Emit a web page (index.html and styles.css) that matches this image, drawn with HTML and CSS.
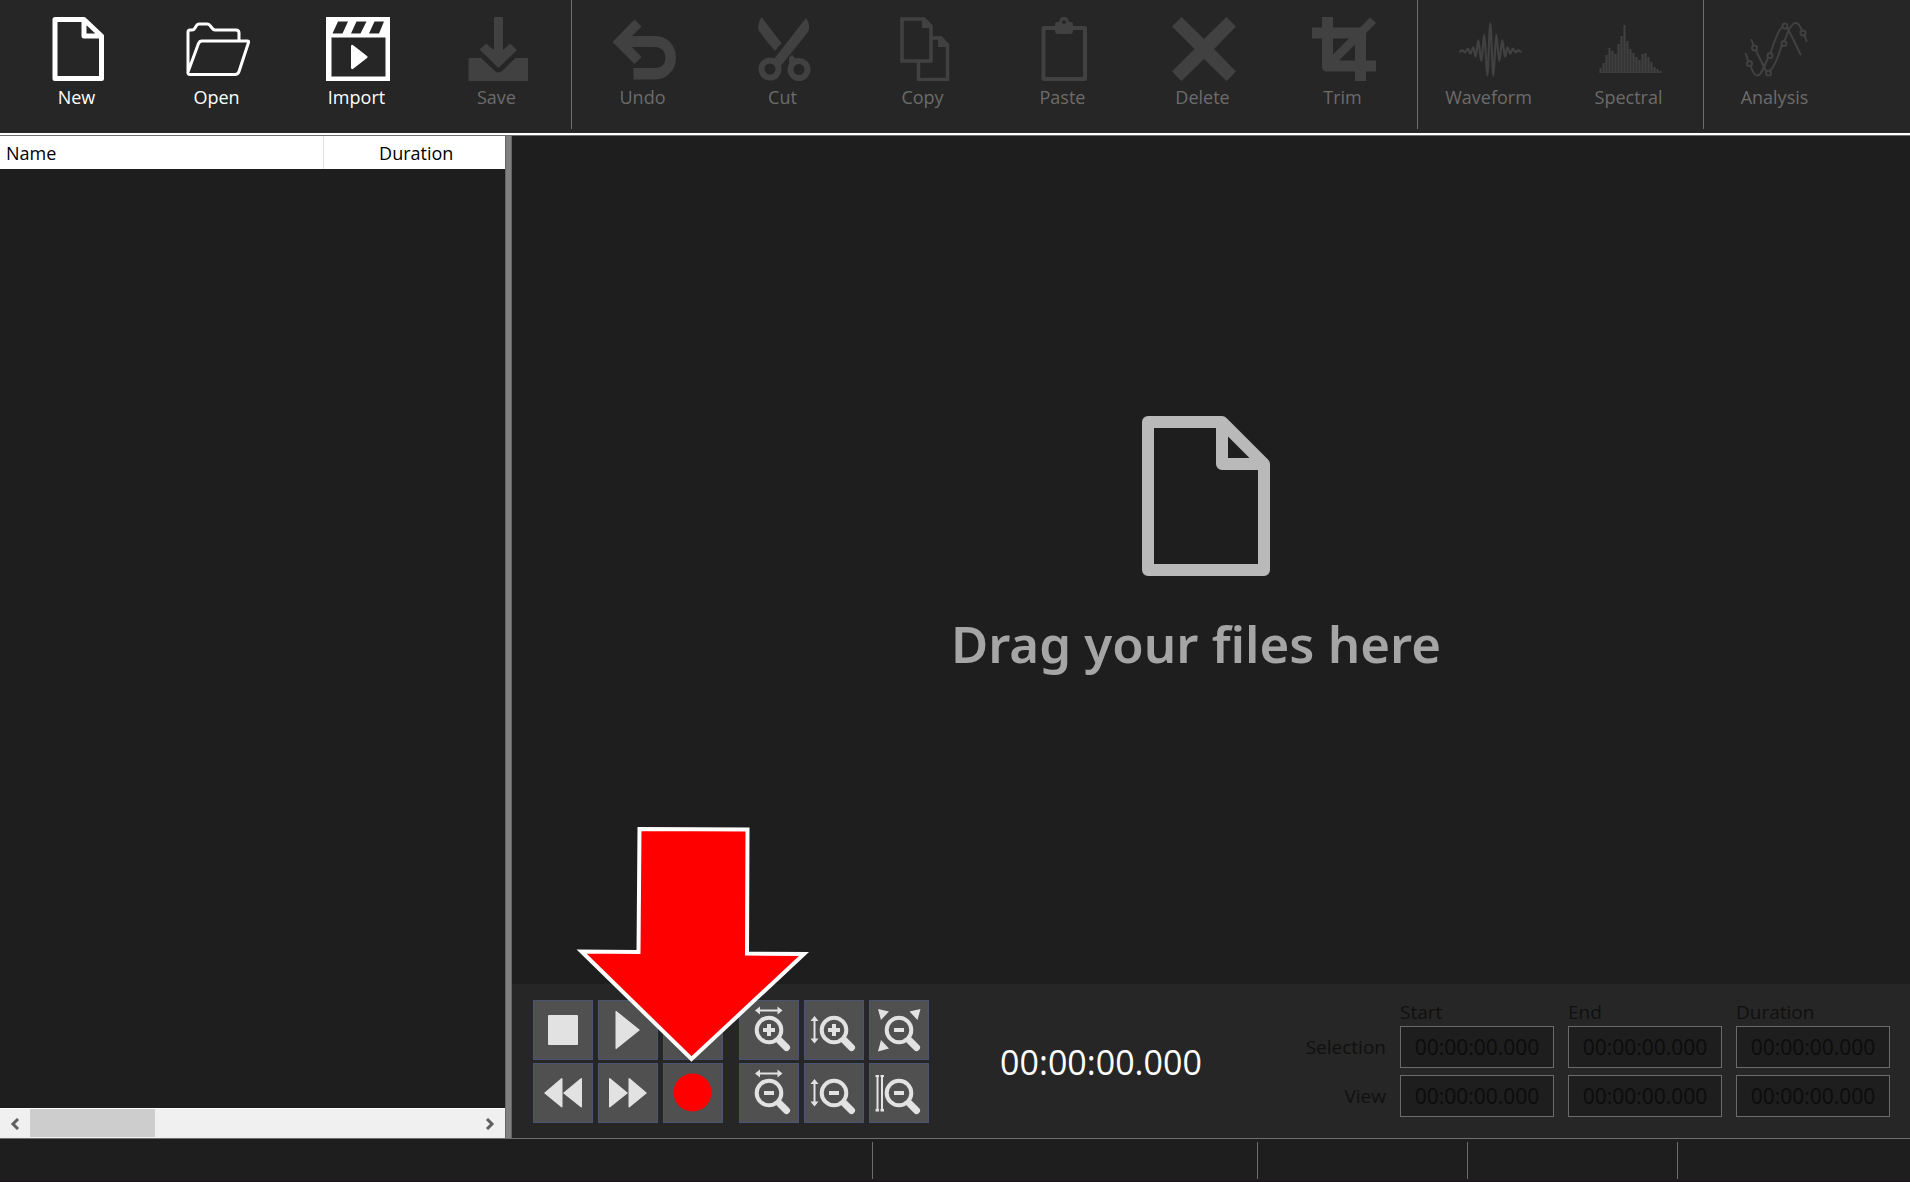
FILE: index.html
```
<!DOCTYPE html>
<html lang="en">
<head>
<meta charset="utf-8">
<title>Audio Editor</title>
<link rel="stylesheet" href="styles.css">
</head>
<body>
<header class="toolbar">
  <div class="tool-group">
    <button class="tool" type="button">
      <svg class="tool-icon" viewBox="0 0 64 64" fill="none" stroke="currentColor" stroke-width="5" stroke-linejoin="round"><path d="M9 2.500H38L55.500 19V61.500H9ZM38 2.500V19H55.500"/></svg>
      <span>New</span>
    </button>
    <button class="tool" type="button">
      <svg class="tool-icon" viewBox="0 0 64 64" fill="none" stroke="currentColor" stroke-width="3" stroke-linejoin="round"><path d="M2 55V15Q2 13 4 13H6Q8 13 9 11L10.500 8.500Q11.500 7 13 7H21Q23 7 24 8.500L26 11Q27.500 13 29 13H50Q53 13 53 16V24M2 55Q1.500 57.500 4 57.500H49Q52 57.500 53 54.500L62.500 25.500Q63 24 61.500 24H16Q13.500 24 12.500 26.500L2 55"/></svg>
      <span>Open</span>
    </button>
    <button class="tool" type="button">
      <svg class="tool-icon" viewBox="0 0 64 64" fill="currentColor" fill-rule="evenodd"><path d="M0 0H64V64H0ZM5.500 20.500V59.500H59.500V20.500ZM12 4.500L6.500 16.500H16.500L22 4.500ZM30.500 4.500L25 16.500H34.500L40.500 4.500ZM48.500 4.500L43 16.500H53L58 4.500Z"/><path d="M25 29Q25.500 27 27.500 28.500L41 39Q42.500 40 41 41L27.500 51.500Q25.500 53 25 51Z"/></svg>
      <span>Import</span>
    </button>
    <button class="tool" type="button" disabled>
      <svg class="tool-icon" viewBox="0 0 64 64" fill="currentColor"><path d="M28 1Q28 0 29 0H36Q37 0 37 1V33L44 26.500L51 33L32.500 51L13.500 32.500L20 26.500L28 33ZM3.500 41H15L29 54Q32.500 57 36 54L49.500 41H61Q62 41 62 42V64H2.500V42Q2.500 41 3.500 41Z"/></svg>
      <span>Save</span>
    </button>
  </div>
  <div class="tool-group">
    <button class="tool" type="button" disabled>
      <svg class="tool-icon" viewBox="0 0 64 64" fill="currentColor"><path d="M0.500 25L22.500 2.500L29.500 9.500L20 19H43Q52 19 58 25Q64 31.500 64 40.500Q64 50 58 56Q52 62.500 43 62.500H21.500V51H43Q48 51 51 48Q53.500 45 53.500 41Q53.500 36.500 51 33.500Q48 30 43 30H20L29.500 40L22.500 47Z"/></svg>
      <span>Undo</span>
    </button>
    <button class="tool" type="button" disabled>
      <svg class="tool-icon" viewBox="0 0 64 64" fill="currentColor"><path d="M9.500 0Q5 7 6.500 13Q14 24 23 34L29.500 26Z"/><path d="M54 1Q59 8 56 15L28 50L22 42Z"/><path d="M37 41L40 38L46 44L37 47Z"/><g fill="none" stroke="currentColor" stroke-width="6"><circle cx="18" cy="52" r="8.500"/><circle cx="47" cy="52.500" r="8.500"/></g></svg>
      <span>Cut</span>
    </button>
    <button class="tool" type="button" disabled>
      <svg class="tool-icon" viewBox="0 0 64 64" fill="none" stroke="currentColor" stroke-width="3.500"><path d="M10 2H32L39 9V44H10Z"/><path d="M40 21H49L55.500 28V62.500H26.500V44"/><path fill="currentColor" stroke="none" d="M30 2H33L39 9V11H30ZM46 21H50L56 28V30H46Z"/></svg>
      <span>Copy</span>
    </button>
    <button class="tool" type="button" disabled>
      <svg class="tool-icon" viewBox="0 0 64 64" fill="none" stroke="currentColor" stroke-width="4" stroke-linejoin="round"><path d="M11.500 11H53V62H11.500Z"/><path fill="currentColor" fill-rule="evenodd" stroke="none" d="M23 7Q23 5 25 5H27Q28 0 32 0Q36 0 37 5H39Q41 5 41 7V14Q41 17 38 17H26Q23 17 23 14ZM32 3A2 2 0 1 0 32 7A2 2 0 1 0 32 3Z"/></svg>
      <span>Paste</span>
    </button>
    <button class="tool" type="button" disabled>
      <svg class="tool-icon" viewBox="0 0 64 64" fill="currentColor"><path d="M9.500 0L32 22L54.500 0L64 9.500L42 32L64 54.500L54.500 64L32 42L9.500 64L0 54.500L22.500 32L0 9.500Z"/></svg>
      <span>Delete</span>
    </button>
    <button class="tool" type="button" disabled>
      <svg class="tool-icon" viewBox="0 0 64 64" fill="currentColor" fill-rule="evenodd"><path d="M10 0H21V10.500H48L58 0.500L64 6L54 16V43.500H64V54.500H54V64H43V54.500H15Q10 54.500 10 49.500V21.500H0V10.500H10ZM21 21.500V37.500L37 21.500ZM43 27.500L27 43.500H43Z"/></svg>
      <span>Trim</span>
    </button>
  </div>
  <div class="tool-group">
    <button class="tool" type="button" disabled>
      <svg class="tool-icon" viewBox="0 0 64 64" fill="none" stroke="currentColor" stroke-width="2.200" stroke-linejoin="round" stroke-linecap="round"><path d="M2 34.700C2.500 34 3.300 33.300 4.300 33.300S6 35.300 7 35.300S9 31.700 10 31.700S11.300 36.700 12.300 36.700S14.300 30.300 15.300 30.300S16.700 39.700 17.700 39.700S19.300 23.300 20.300 23.300S22.300 44 23.300 44S25.300 17.700 26.300 17.700S28.300 58.700 29.300 58.700S31.300 6.300 32.300 6.300S34.300 58.700 35.300 58.700S37.300 17.700 38.300 17.700S40.300 44 41.300 44S43.300 23.300 44.300 23.300S46 39.700 47 39.700S48.300 30.300 49.300 30.300S51.300 36.700 52.300 36.700S53.700 31.700 54.700 31.700S56.700 35.300 57.700 35.300S59.300 33.300 60.300 33.300S62 34 62.700 34.700"/></svg>
      <span>Waveform</span>
    </button>
    <button class="tool" type="button" disabled>
      <svg class="tool-icon" viewBox="0 0 64 64" fill="none" stroke="currentColor" stroke-width="2"><path d="M2.500 56V51M5.500 56V46M8.500 56V38M11.500 56V31M14.500 56V34M17.500 56V37M20.500 56V27M23.500 56V19M26.500 56V8M29.500 56V24M32.500 56V32M35.500 56V36M38.500 56V40M41.500 56V43M44.500 56V37M47.500 56V36M50.500 56V40M53.500 56V45M56.500 56V50M59.500 56V52M62.500 56V54"/><path stroke-width="1" opacity=".5" d="M2 55.500H63M7 56V46M10 56V38M13 56V34M16 56V37M19 56V37M22 56V27M25 56V19M28 56V24M31 56V32M34 56V36M37 56V40M40 56V43M43 56V43M46 56V37M49 56V40M52 56V45M55 56V50M58 56V52"/></svg>
      <span>Spectral</span>
    </button>
  </div>
  <div class="tool-group">
    <button class="tool" type="button" disabled>
      <svg class="tool-icon" viewBox="0 0 64 64" fill="none" stroke="currentColor" stroke-width="2" stroke-linecap="round"><path d="M2 37L4 43.500M6.500 49Q10 58.500 13 58.500Q16 59 19 52L24 41M26.500 36Q34 13 38 10.500M42.500 10.500Q45 13 56.500 37.500M7.500 23L9.500 28.500M12 33.500L21.500 53M26 53.500Q31 50 37.500 29M40.500 24Q47 5 52 6Q55 6 58 13.500M60.500 18.500L62.500 24"/><circle cx="5.500" cy="46.500" r="2.500"/><circle cx="10.500" cy="31" r="2.500"/><circle cx="24.500" cy="56" r="2.500"/><circle cx="26" cy="38.500" r="2.500"/><circle cx="40" cy="26.500" r="2.500"/><circle cx="41" cy="9" r="2.500"/><circle cx="59" cy="16" r="2.500"/></svg>
      <span>Analysis</span>
    </button>
  </div>
</header>

<main class="workspace">
  <section class="files" aria-label="Files">
    <table class="file-table">
      <thead><tr><th class="col-name" scope="col">Name</th><th class="col-duration" scope="col">Duration</th></tr></thead>
      <tbody></tbody>
    </table>
    <div class="file-space"></div>
    <div class="scrollbar">
      <button class="scroll-button" type="button" aria-label="Scroll left"><svg width="10" height="12" viewBox="0 0 10 12" fill="none" stroke="currentColor" stroke-width="3"><path d="M8 1L3 6L8 11"/></svg></button>
      <div class="scroll-track"><div class="scroll-thumb"></div></div>
      <button class="scroll-button" type="button" aria-label="Scroll right"><svg width="10" height="12" viewBox="0 0 10 12" fill="none" stroke="currentColor" stroke-width="3"><path d="M2 1L7 6L2 11"/></svg></button>
    </div>
  </section>
  <div class="splitter"></div>
  <section class="editor">
    <div class="drop-zone">
      <svg class="drop-icon" viewBox="0 0 128 160" fill="none" stroke="currentColor" stroke-width="12" stroke-linejoin="round"><path d="M6 6H80L122 48V154H6ZM80 6V48H122"/></svg>
      <p class="drop-text">Drag your files here</p>
    </div>
    <div class="player">
      <div class="pad">
        <button class="key" type="button" aria-label="Stop"><svg viewBox="0 0 60 60"><rect x="15" y="15" width="30" height="30" rx="1"/></svg></button>
        <button class="key" type="button" aria-label="Play"><svg viewBox="0 0 60 60"><path d="M17.500 12Q17.500 10 19 11.500L42 30L19 48.500Q17.500 50 17.500 48Z"/></svg></button>
        <button class="key" type="button" aria-label="Loop"><svg viewBox="0 0 60 60"><path d="M17 20H43V40H17Z"/></svg></button>
        <button class="key" type="button" aria-label="Rewind"><svg viewBox="0 0 60 60"><path d="M11 30L28 15.500Q29.500 14.500 29.500 16V43.500Q29.500 45 28 44ZM30 30L47.500 15.500Q49 14.500 49 16V43.500Q49 45 47.500 44Z"/></svg></button>
        <button class="key" type="button" aria-label="Fast forward"><svg viewBox="0 0 60 60"><path d="M49 30L32 15.500Q30.500 14.500 30.500 16V43.500Q30.500 45 32 44ZM30 30L12.500 15.500Q11 14.500 11 16V43.500Q11 45 12.500 44Z"/></svg></button>
        <div class="record-cell">
          <button class="key" type="button" aria-label="Record"><svg class="record" viewBox="0 0 60 60"><circle cx="29.500" cy="29.500" r="19"/></svg></button>
          <svg class="pointer" viewBox="0 0 236 240"><path d="M64.500 4L172.500 4.500L172 128.500L229 129L116.500 234L6.500 126.500L63.500 127Z" fill="#f00" stroke="#fff" stroke-width="4"/></svg>
        </div>
      </div>
      <div class="pad">
        <button class="key" type="button" aria-label="Zoom in horizontally"><svg viewBox="0 0 60 60"><path d="M16 10.500L21 6.500V9.500H38.500V6.500L43.500 10.500L38.500 14.500V11.500H21V14.500Z"/><g class="lens"><circle cx="30" cy="30" r="12.300"/><path d="M30 24V36M24 30H36"/><path class="handle" d="M40.500 40.500L47.500 47.500"/></g></svg></button>
        <button class="key" type="button" aria-label="Zoom in vertically"><svg viewBox="0 0 60 60"><path d="M10.500 16L14.500 21H11.500V38.500H14.500L10.500 43.500L6.500 38.500H9.500V21H6.500Z"/><g class="lens"><circle cx="30" cy="30" r="12.300"/><path d="M30 24V36M24 30H36"/><path class="handle" d="M40.500 40.500L47.500 47.500"/></g></svg></button>
        <button class="key" type="button" aria-label="Zoom to fit"><svg viewBox="0 0 60 60"><path d="M9 9L20 11.500L12 20ZM51.500 9L40.500 11.500L48.500 20ZM9 51.500L20 48.500L12 40Z"/><g class="lens"><circle cx="30" cy="30" r="12.300"/><path d="M25 30H35"/><path class="handle" d="M40.500 40.500L47.500 47.500"/></g></svg></button>
        <button class="key" type="button" aria-label="Zoom out horizontally"><svg viewBox="0 0 60 60"><path d="M16 10.500L21 6.500V9.500H38.500V6.500L43.500 10.500L38.500 14.500V11.500H21V14.500Z"/><g class="lens"><circle cx="30" cy="30" r="12.300"/><path d="M25 30H35"/><path class="handle" d="M40.500 40.500L47.500 47.500"/></g></svg></button>
        <button class="key" type="button" aria-label="Zoom out vertically"><svg viewBox="0 0 60 60"><path d="M10.500 16L14.500 21H11.500V38.500H14.500L10.500 43.500L6.500 38.500H9.500V21H6.500Z"/><g class="lens"><circle cx="30" cy="30" r="12.300"/><path d="M25 30H35"/><path class="handle" d="M40.500 40.500L47.500 47.500"/></g></svg></button>
        <button class="key" type="button" aria-label="Zoom to selection"><svg viewBox="0 0 60 60"><path d="M6.500 12H10V14H9.500V46H10V48.500H6.500V46H7.500V14H6.500ZM11.500 12H15V14H14V46H15V48.500H11.500V46H12V14H11.500Z"/><g class="lens"><circle cx="30" cy="30" r="12.300"/><path d="M25 30H35"/><path class="handle" d="M40.500 40.500L47.500 47.500"/></g></svg></button>
      </div>
      <output class="clock">00:00:00.000</output>
      <div class="ranges">
        <span></span>
        <span class="range-head" id="start">Start</span>
        <span class="range-head" id="end">End</span>
        <span class="range-head" id="duration">Duration</span>
        <span class="range-label" id="selection">Selection</span>
        <input class="field" type="text" value="00:00:00.000" aria-labelledby="selection start" disabled>
        <input class="field" type="text" value="00:00:00.000" aria-labelledby="selection end" disabled>
        <input class="field" type="text" value="00:00:00.000" aria-labelledby="selection duration" disabled>
        <span class="range-label" id="view">View</span>
        <input class="field" type="text" value="00:00:00.000" aria-labelledby="view start" disabled>
        <input class="field" type="text" value="00:00:00.000" aria-labelledby="view end" disabled>
        <input class="field" type="text" value="00:00:00.000" aria-labelledby="view duration" disabled>
      </div>
    </div>
  </section>
</main>

<footer class="status">
  <div class="status-cell status-main"></div>
  <div class="status-cell status-wide"></div>
  <div class="status-cell"></div>
  <div class="status-cell"></div>
  <div class="status-cell"></div>
</footer>
</body>
</html>
```
FILE: styles.css
```
* {
  box-sizing: border-box;
}

body {
  margin: 0;
  min-height: 100vh;
  display: flex;
  flex-direction: column;
  background: #1e1e1e;
  color: #fff;
  font: 18px/24px "Open Sans", "Noto Sans", sans-serif;
}

button,
input {
  font: inherit;
  color: inherit;
}

svg {
  display: block;
}

/* Toolbar */
.toolbar {
  display: flex;
  padding: 0 0 4px 6px;
  background: #262626;
  border-bottom: 2px solid #fff;
}

.tool-group {
  display: flex;
  height: 129px;
  padding-right: 5px;
  border-right: 1px solid #6e6e6e;
}

.tool-group:last-child {
  border-right: 0;
}

.tool {
  width: 140px;
  display: flex;
  flex-direction: column;
  align-items: center;
  gap: 4px;
  padding: 17px 0 0 4px;
  border: 0;
  background: none;
  color: #fff;
}

.tool span {
  padding-right: 3px;
}

.tool-icon {
  width: 64px;
  height: 64px;
}

.tool:disabled {
  color: #6c6c6c;
}

.tool:disabled .tool-icon {
  color: #414141;
}

/* Workspace */
.workspace {
  flex: 1;
  display: flex;
  border-top: 1px solid #6e6e6e;
  border-bottom: 1px solid #6e6e6e;
}

.files {
  width: 505px;
  display: flex;
  flex-direction: column;
}

.file-table {
  width: 100%;
  border-collapse: collapse;
  table-layout: fixed;
  background: #fff;
  color: #000;
}

.file-table th {
  height: 33px;
  padding: 0 6px;
  font-weight: 400;
  text-align: left;
}

.file-table .col-duration {
  width: 182px;
  padding-left: 10px;
  border-left: 1px solid #e0e0e0;
  text-align: center;
}

.file-space {
  flex: 1;
}

.scrollbar {
  height: 30px;
  display: flex;
  border-top: 1px solid #fff;
  background: #f0f0f0;
}

.scroll-button {
  width: 30px;
  display: grid;
  place-items: center;
  padding: 0;
  border: 0;
  background: none;
  color: #606060;
}

.scroll-track {
  flex: 1;
  padding-bottom: 1px;
}

.scroll-thumb {
  width: 125px;
  height: 100%;
  background: #cdcdcd;
}

.splitter {
  width: 7px;
  border: solid #646464;
  border-width: 0 1px;
  background: #808080;
}

.editor {
  flex: 1;
  display: flex;
  flex-direction: column;
}

.drop-zone {
  flex: 1;
  display: flex;
  flex-direction: column;
  align-items: center;
  justify-content: center;
  gap: 31px;
  padding: 0 10px 26px 0;
}

.drop-icon {
  width: 128px;
  height: 160px;
  color: #b9b9b9;
}

.drop-text {
  margin: 0;
  padding-right: 20px;
  color: #a5a5a5;
  font: 600 51px/72px "Noto Sans", "Open Sans", sans-serif;
}

/* Player */
.player {
  display: flex;
  gap: 16px;
  padding: 16px 20px 15px 21px;
  background: #262626;
}

.pad {
  display: grid;
  grid-template-columns: repeat(3, 60px);
  grid-auto-rows: 60px;
  align-content: start;
  gap: 3px 5px;
}

.key {
  width: 60px;
  height: 60px;
  padding: 0;
  border: 1px solid #4a5573;
  background: #505050;
}

.key svg {
  width: 60px;
  height: 60px;
  margin: -1px;
  fill: #e2e2e2;
}

.key .record {
  fill: #f00;
}

.lens {
  fill: none;
  stroke: #e2e2e2;
  stroke-width: 4;
}

.handle {
  stroke-width: 7;
  stroke-linecap: round;
}

.record-cell {
  position: relative;
}

/* Callout over the record button */
.pointer {
  position: absolute;
  left: -88px;
  bottom: 58px;
  width: 236px;
  height: 240px;
  z-index: 1;
  pointer-events: none;
}

.clock {
  flex: 1;
  align-self: center;
  padding-right: 14px;
  font-size: 34px;
  line-height: 48px;
  text-align: center;
}

.ranges {
  display: grid;
  grid-template-columns: 99px repeat(3, 154px);
  grid-template-rows: 26px 49px 42px;
  column-gap: 14px;
  align-content: start;
  color: #101010;
  font-size: 19px;
}

.range-label {
  line-height: 42px;
  text-align: right;
}

.field {
  width: 100%;
  height: 42px;
  padding: 0;
  border: 1px solid #6a6a6a;
  border-radius: 0;
  background: #1e1e1e;
  color: #0c0c0c;
  font-size: 21px;
  text-align: center;
}

/* Status bar */
.status {
  height: 43px;
  display: flex;
  padding: 3px 0 2px;
  border-bottom: 1px solid #1a1018;
}

.status-cell {
  width: 210px;
  border-right: 1px solid #6e6e6e;
}

.status-wide {
  width: 385px;
}

.status-main {
  flex: 1;
}

.status-cell:last-child {
  width: 232px;
  border-right: 0;
}
```
